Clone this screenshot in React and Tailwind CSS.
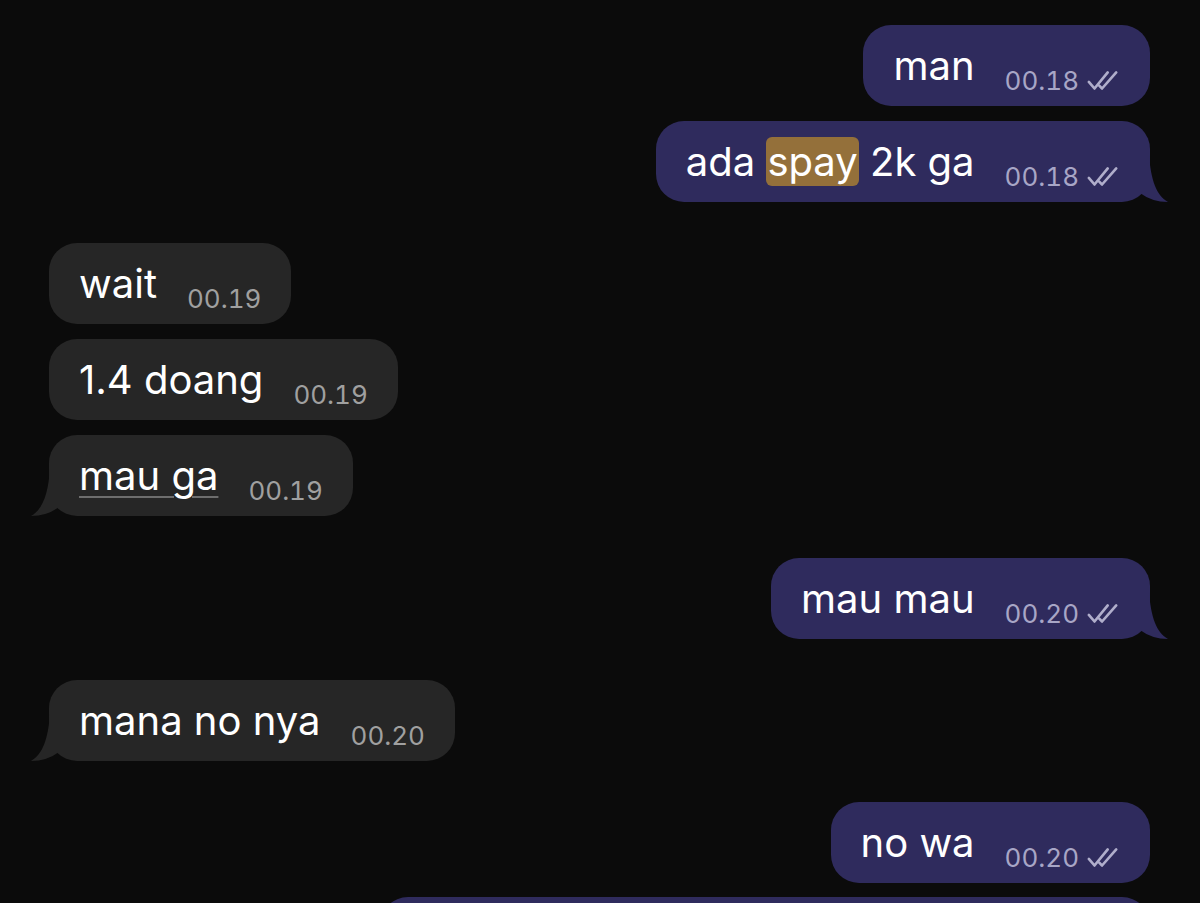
import React from 'react';

const font = { fontFamily: 'Inter, "Noto Sans", sans-serif' };

function Checks() {
    return (
        <svg viewBox="0 0 36 22" className="mb-[3px] ml-[7px] h-[22px] w-[34px]" fill="none" stroke="#b0aecb" strokeWidth="2.8" strokeLinecap="round" strokeLinejoin="round">
            <path d="M3 13 L9 20 L23 3" />
            <path d="M14 17 L17 20 L32 3" />
        </svg>
    );
}

function Tail({ out }) {
    const color = out ? '#2f2b5d' : '#262626';
    return (
        <svg
            viewBox="0 0 40 48"
            className={out ? 'absolute right-[-20px] bottom-[-1px] h-[48px] w-[40px]' : 'absolute left-[-20px] bottom-[-1px] h-[48px] w-[40px] -scale-x-100'}
        >
            <path d="M19 0 C21 25 26 40 38 47 Q22 47 10 38 L0 38 L0 0 Z" fill={color} />
        </svg>
    );
}

function Bubble({ out, tail, time, children, className }) {
    return (
        <div
            className={`relative flex h-[81px] shrink-0 items-end rounded-[28px] px-[30px] pb-[12px] ${
                out ? 'self-end bg-[#2f2b5d]' : 'self-start bg-[#262626]'
            } ${className}`}
        >
            <span className="mb-[8px] text-[40px] leading-[40px] whitespace-nowrap text-white">
                {children}
            </span>
            <span className={`ml-[30px] text-[26px] leading-[26px] tabular-nums ${out ? 'text-[#a8a6c6]' : 'text-[#a0a0a0]'}`}>
                {time}
            </span>
            {out && <Checks />}
            {tail && <Tail out={out} />}
        </div>
    );
}

export default function App() {
    return (
        <div className="flex h-[903px] w-[1200px] flex-col overflow-hidden bg-[#0b0b0b] pt-[25px] pr-[50px] pl-[49px]" style={font}>
            <Bubble out time="00.18">man</Bubble>
            <Bubble out tail time="00.18" className="mt-[15px]">
                ada <span className="rounded-[6px] bg-[#94703a] px-[1px]">spay</span> 2k ga
            </Bubble>

            <Bubble time="00.19" className="mt-[41px]">wait</Bubble>
            <Bubble time="00.19" className="mt-[15px]">1.4 doang</Bubble>
            <Bubble tail time="00.19" className="mt-[15px]">
                <span className="underline decoration-[#6e6e6e] decoration-2 underline-offset-[6px]">mau ga</span>
            </Bubble>

            <Bubble out tail time="00.20" className="mt-[42px]">mau mau</Bubble>

            <Bubble tail time="00.20" className="mt-[41px]">mana no nya</Bubble>

            <Bubble out time="00.20" className="mt-[41px]">no wa</Bubble>

            {/* next message, cut off by the screen edge */}
            <div className="mt-[14px] h-[81px] w-[770px] shrink-0 self-end rounded-[28px] bg-[#2f2b5d]" />
        </div>
    );
}
